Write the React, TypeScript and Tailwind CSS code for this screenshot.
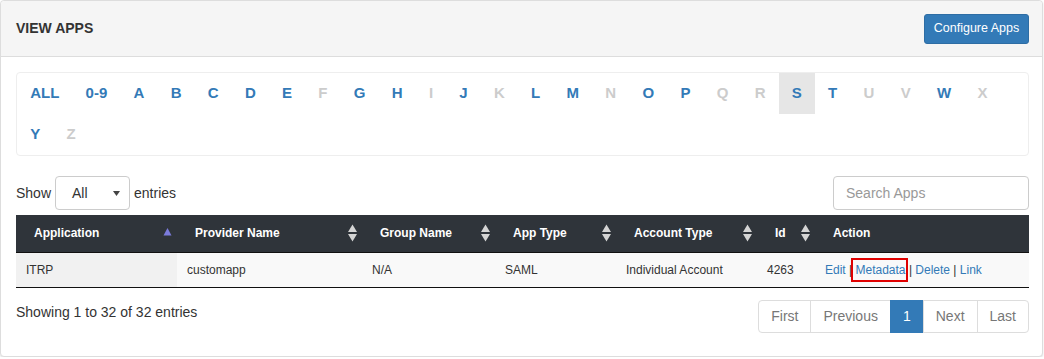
import React from 'react';

const rowOne = [
  { label: 'ALL', on: true },
  { label: '0-9', on: true },
  { label: 'A', on: true },
  { label: 'B', on: true },
  { label: 'C', on: true },
  { label: 'D', on: true },
  { label: 'E', on: true },
  { label: 'F', on: false },
  { label: 'G', on: true },
  { label: 'H', on: true },
  { label: 'I', on: false },
  { label: 'J', on: true },
  { label: 'K', on: false },
  { label: 'L', on: true },
  { label: 'M', on: true },
  { label: 'N', on: false },
  { label: 'O', on: true },
  { label: 'P', on: true },
  { label: 'Q', on: false },
  { label: 'R', on: false },
  { label: 'S', on: true, active: true },
  { label: 'T', on: true },
  { label: 'U', on: false },
  { label: 'V', on: false },
  { label: 'W', on: true },
  { label: 'X', on: false },
];

const rowTwo = [
  { label: 'Y', on: true },
  { label: 'Z', on: false },
];

const columns = [
  { label: 'Application', width: 'w-[161px]', sort: 'asc' },
  { label: 'Provider Name', width: 'w-[185px]', sort: 'both' },
  { label: 'Group Name', width: 'w-[133px]', sort: 'both' },
  { label: 'App Type', width: 'w-[121px]', sort: 'both' },
  { label: 'Account Type', width: 'w-[141px]', sort: 'both' },
  { label: 'Id', width: 'w-[58px]', sort: 'both' },
  { label: 'Action', width: 'w-[214px]', sort: 'none' },
];

type Letter = { label: string; on: boolean; active?: boolean };

function LetterRow({ letters }: { letters: Letter[] }) {
  return (
    <div className="flex h-[41px]">
      {letters.map((l) => (
        <span
          key={l.label}
          className={`flex items-center px-[13.15px] text-[15px] font-bold ${
            l.on ? 'text-[#337ab7]' : 'text-[#cccccc]'
          } ${l.active ? 'bg-[#e6e6e6]' : ''}`}
        >
          {l.label}
        </span>
      ))}
    </div>
  );
}

function SortIcon({ kind }: { kind: string }) {
  if (kind === 'asc') {
    return (
      <svg width="9" height="18" viewBox="0 0 9 18" className="shrink-0">
        <path d="M0.5 11.5 L4.5 4 L8.5 11.5 Z" fill="#7b7bdb" />
      </svg>
    );
  }
  if (kind === 'both') {
    return (
      <svg width="9" height="18" viewBox="0 0 9 18" className="shrink-0">
        <path d="M0 8 L4.5 0.5 L9 8 Z" fill="#d4d4d4" />
        <path d="M0 10 L4.5 17.5 L9 10 Z" fill="#d4d4d4" />
      </svg>
    );
  }
  return null;
}

export default function App() {
  return (
    <div className="bg-white font-['Liberation_Sans',Arial,sans-serif] text-[#333333]">
      <div className="w-[1043px] rounded-[4px] border border-[#dddddd] bg-white shadow-[0_1px_2px_rgba(0,0,0,0.12)]">
        {/* Heading */}
        <div className="flex h-[56px] items-center justify-between rounded-t-[4px] border-b border-[#dddddd] bg-[#f5f5f5] pl-[15px] pr-[13px]">
          <h3 className="text-[14px] font-bold text-[#333333]">VIEW APPS</h3>
          <button className="h-[30px] w-[105px] rounded-[3px] border border-[#2e6da4] bg-[#337ab7] text-[12.5px] text-white">
            Configure Apps
          </button>
        </div>

        {/* Body */}
        <div className="pl-[15px] pr-[13px] pt-[15px] pb-[23px]">
          <div className="rounded-[4px] border border-[#eeeeee]">
            <LetterRow letters={rowOne} />
            <LetterRow letters={rowTwo} />
          </div>

          {/* Length + search */}
          <div className="mt-[20px] flex items-center justify-between">
            <div className="flex items-center gap-[4px] text-[14px]">
              <span>Show</span>
              <div className="flex h-[34px] w-[75px] items-center justify-between rounded-[4px] border border-[#cccccc] pl-[16px] pr-[9px]">
                <span>All</span>
                <svg width="7" height="5" viewBox="0 0 7 5">
                  <path d="M0 0 L7 0 L3.5 5 Z" fill="#444444" />
                </svg>
              </div>
              <span>entries</span>
            </div>
            <input
              type="text"
              placeholder="Search Apps"
              className="h-[34px] w-[196px] rounded-[4px] border border-[#cccccc] px-[12px] text-[14px] placeholder-[#999999] outline-none"
            />
          </div>

          {/* Table */}
          <table className="mt-[5px] w-[1013px] table-fixed border-collapse text-[12px]">
            <thead>
              <tr className="h-[37px] border-b border-[#111111] bg-[#2f343a] text-white">
                {columns.map((c) => (
                  <th key={c.label} className={`${c.width} p-0 text-left font-bold`}>
                    <div className="flex items-center justify-between pl-[18px] pr-[5px]">
                      <span>{c.label}</span>
                      <SortIcon kind={c.sort} />
                    </div>
                  </th>
                ))}
              </tr>
            </thead>
            <tbody>
              <tr className="h-[35px] border-b border-[#111111] bg-[#f9f9f9]">
                <td className="bg-[#f1f1f1] pl-[10px]">ITRP</td>
                <td className="pl-[10px]">customapp</td>
                <td className="pl-[10px]">N/A</td>
                <td className="pl-[10px]">SAML</td>
                <td className="pl-[10px]">Individual Account</td>
                <td className="pl-[10px]">4263</td>
                <td className="pl-[10px]">
                  <span className="text-[#337ab7]">Edit</span> |{' '}
                  <span className="relative text-[#337ab7]">
                    Metadata
                    <span className="absolute -left-[4px] -right-[2px] -top-[5px] -bottom-[5px] border-2 border-[#e00000]" />
                  </span>{' '}
                  | <span className="text-[#337ab7]">Delete</span> |{' '}
                  <span className="text-[#337ab7]">Link</span>
                </td>
              </tr>
            </tbody>
          </table>

          {/* Footer */}
          <div className="mt-[12px] flex items-start justify-between">
            <div className="pt-[2px] text-[14px] leading-[20px]">Showing 1 to 32 of 32 entries</div>
            <div className="flex h-[33px] text-[14px] text-[#777777]">
              <span className="flex items-center rounded-l-[4px] border border-[#dddddd] px-[12px]">First</span>
              <span className="-ml-px flex items-center border border-[#dddddd] px-[12px]">Previous</span>
              <span className="-ml-px flex items-center border border-[#337ab7] bg-[#337ab7] px-[12px] text-white">1</span>
              <span className="-ml-px flex items-center border border-[#dddddd] px-[12px]">Next</span>
              <span className="-ml-px flex items-center rounded-r-[4px] border border-[#dddddd] px-[12px]">Last</span>
            </div>
          </div>
        </div>
      </div>
    </div>
  );
}
